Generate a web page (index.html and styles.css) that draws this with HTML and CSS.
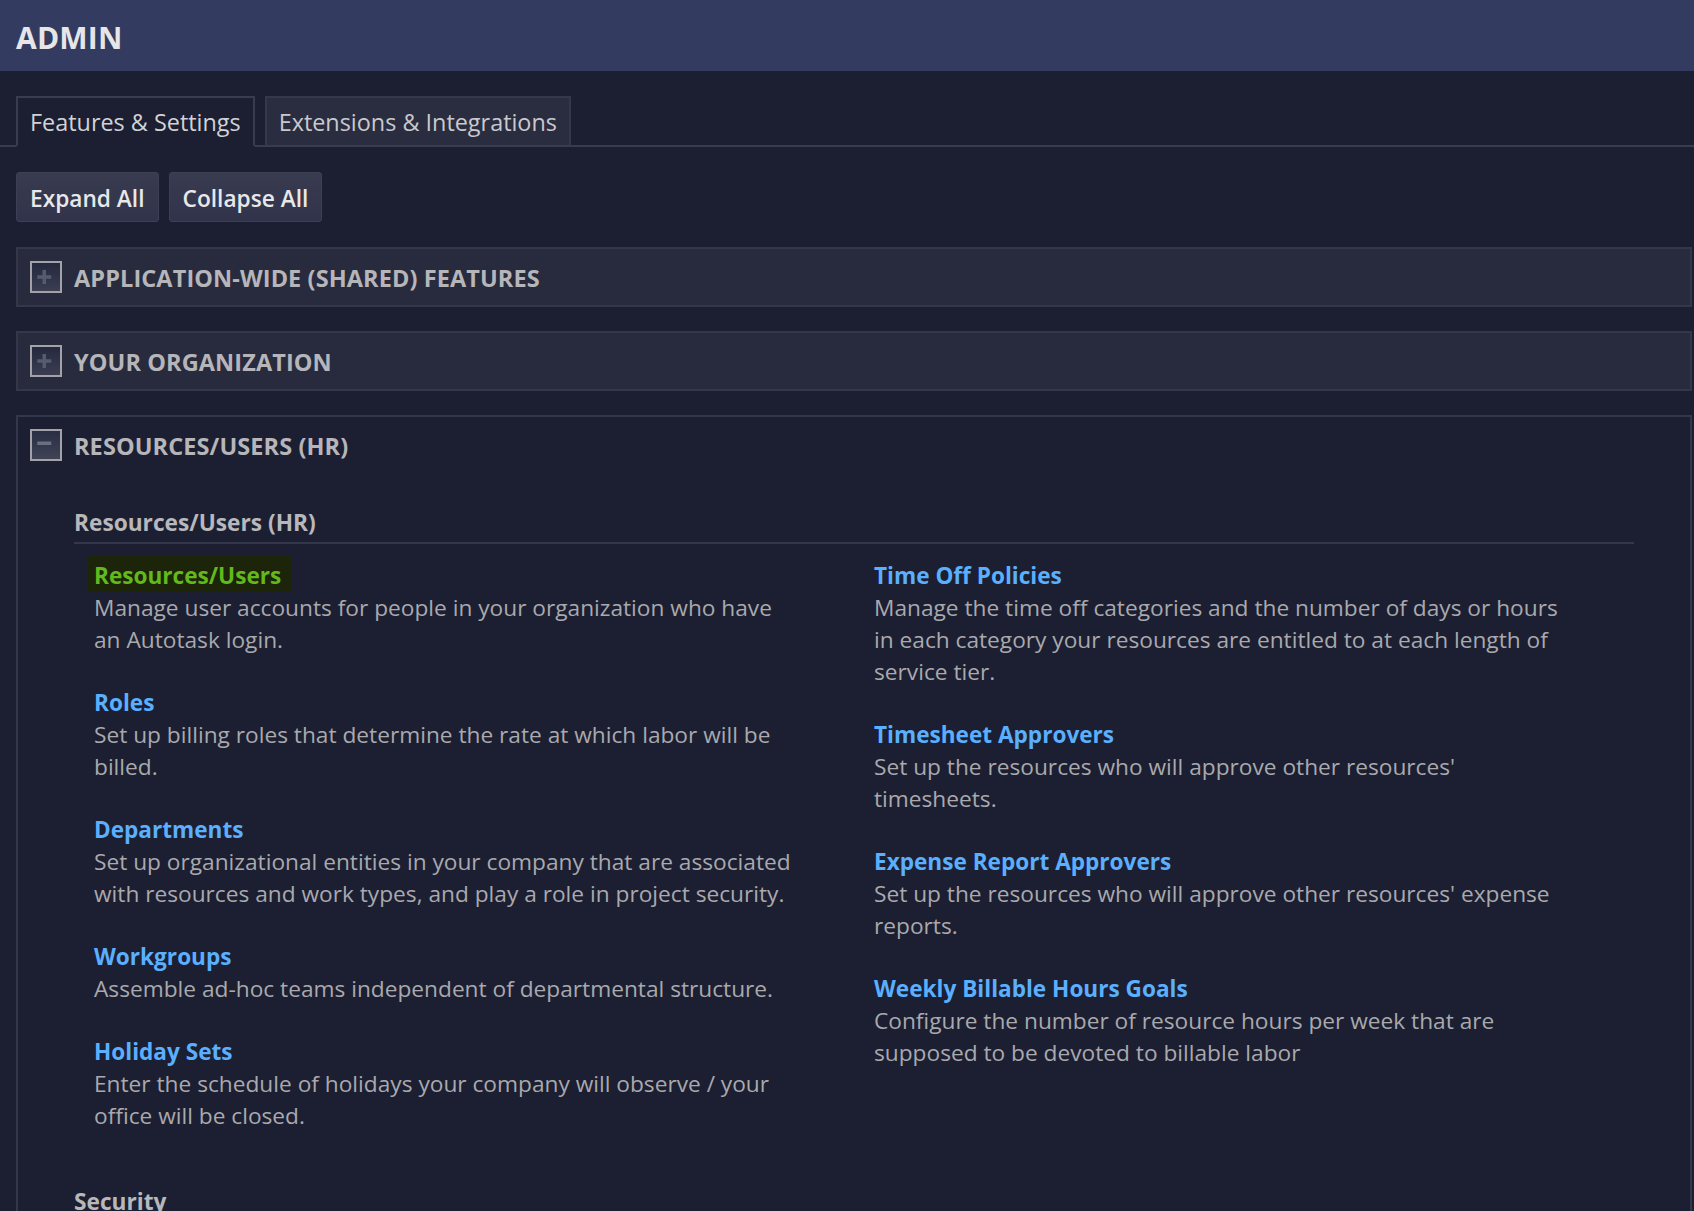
FILE: index.html
```html
<!DOCTYPE html>
<html lang="en">
<head>
    <meta charset="UTF-8">
    <meta name="viewport" content="width=device-width, initial-scale=1.0">
    <title>Admin</title>
    <link rel="stylesheet" href="styles.css">
</head>
<body>
    <header class="page-header"><h1>ADMIN</h1></header>

    <nav class="tabs">
        <a class="tab active" href="#">Features &amp; Settings</a>
        <a class="tab" href="#">Extensions &amp; Integrations</a>
    </nav>

    <main class="content">
        <div class="toolbar">
            <button class="btn">Expand All</button>
            <button class="btn">Collapse All</button>
        </div>

        <section class="panel">
            <div class="panel-head">
                <span class="toggle"><svg viewBox="0 0 32 32" width="28" height="28"><path d="M6 14h16v4H6zM12 8h4v16h-4z" fill="#575b6e"/></svg></span>
                <h2>APPLICATION-WIDE (SHARED) FEATURES</h2>
            </div>
        </section>

        <section class="panel">
            <div class="panel-head">
                <span class="toggle"><svg viewBox="0 0 32 32" width="28" height="28"><path d="M6 14h16v4H6zM12 8h4v16h-4z" fill="#575b6e"/></svg></span>
                <h2>YOUR ORGANIZATION</h2>
            </div>
        </section>

        <section class="panel open">
            <div class="panel-head">
                <span class="toggle"><svg viewBox="0 0 32 32" width="28" height="28"><path d="M6 12h16v4H6z" fill="#6b6f82"/></svg></span>
                <h2>RESOURCES/USERS (HR)</h2>
            </div>
            <div class="panel-body">
                <div class="group">
                    <h3>Resources/Users (HR)</h3>
                    <div class="cols">
                        <div class="col">
                            <div class="item">
                                <a class="current" href="#">Resources/Users</a>
                                <p>Manage user accounts for people in your organization who have an Autotask login.</p>
                            </div>
                            <div class="item">
                                <a href="#">Roles</a>
                                <p>Set up billing roles that determine the rate at which labor will be billed.</p>
                            </div>
                            <div class="item">
                                <a href="#">Departments</a>
                                <p>Set up organizational entities in your company that are associated with resources and work types, and play a role in project security.</p>
                            </div>
                            <div class="item">
                                <a href="#">Workgroups</a>
                                <p>Assemble ad-hoc teams independent of departmental structure.</p>
                            </div>
                            <div class="item">
                                <a href="#">Holiday Sets</a>
                                <p>Enter the schedule of holidays your company will observe / your office will be closed.</p>
                            </div>
                        </div>
                        <div class="col">
                            <div class="item">
                                <a href="#">Time Off Policies</a>
                                <p>Manage the time off categories and the number of days or hours in each category your resources are entitled to at each length of service tier.</p>
                            </div>
                            <div class="item">
                                <a href="#">Timesheet Approvers</a>
                                <p>Set up the resources who will approve other resources' timesheets.</p>
                            </div>
                            <div class="item">
                                <a href="#">Expense Report Approvers</a>
                                <p>Set up the resources who will approve other resources' expense reports.</p>
                            </div>
                            <div class="item">
                                <a href="#">Weekly Billable Hours Goals</a>
                                <p>Configure the number of resource hours per week that are supposed to be devoted to billable labor</p>
                            </div>
                        </div>
                    </div>
                </div>

                <div class="group">
                    <h3>Security</h3>
                    <div class="cols">
                        <div class="col">
                            <div class="item">
                                <a href="#">Security Levels</a>
                                <p>Define what resources can see and do in the application.</p>
                            </div>
                        </div>
                        <div class="col">
                            <div class="item">
                                <a href="#">Protected Data Permissions</a>
                                <p>Control access to protected fields.</p>
                            </div>
                        </div>
                    </div>
                </div>
            </div>
        </section>
    </main>
</body>
</html>
```

FILE: styles.css
```css
* { box-sizing: border-box; margin: 0; padding: 0; }
body { background: #1c1f31; color: #a9a9ae; font-family: "Open Sans", "Noto Sans", sans-serif; font-size: 22.7px; overflow: hidden; }
a { text-decoration: none; }

.page-header { background: #343b60; height: 71px; display: flex; align-items: center; padding: 3px 0 0 16px; }
.page-header h1 { color: #e6e6e8; font-size: 30px; font-weight: 700; letter-spacing: 0.2px; }

.tabs { display: flex; gap: 10px; margin-top: 25px; padding-left: 16px; border-bottom: 2px solid #393c4f; }
.tab { height: 51px; margin-bottom: -2px; padding: 0 12px; display: flex; align-items: center; font-size: 23.4px; color: #c9c9cd; background: #2a2d3f; border: 2px solid #35384b; border-bottom-color: #393c4f; }
.tab.active { background: #1c1f31; border-color: #393c4f; border-bottom-color: #1c1f31; color: #d2d2d6; }

.content { padding: 0 2px 0 16px; }

.toolbar { display: flex; gap: 10px; margin: 25px 0 25px; }
.btn { height: 50px; padding: 2px 13px 0; font-family: inherit; font-size: 22.7px; font-weight: 600; color: #e8e8ea; background: linear-gradient(#393c50, #30334a); border: 1px solid #3d4054; border-radius: 3px; }

.panel { border: 2px solid #34374a; margin-bottom: 24px; }
.panel-head { height: 56px; display: flex; align-items: center; gap: 12px; padding: 0 0 0 12px; background: #282b3d; }
.panel-head h2 { font-size: 23.5px; font-weight: 700; color: #b6b6ba; letter-spacing: 0.1px; padding-top: 2px; }
.panel.open .panel-head { background: #1c1f31; }

.toggle { width: 32px; height: 32px; border: 2px solid #a2a2a8; background: linear-gradient(#25293f, #3b3e51); display: flex; align-items: center; justify-content: center; }
.panel.open .toggle { background: linear-gradient(#2a2e44, #404356); }

.panel-body { padding: 9px 56px 0 56px; }
.group { margin-top: 25px; }
.group + .group { margin-top: 23px; }
.group h3 { font-size: 22.7px; font-weight: 700; color: #b8b8bc; line-height: 32px; padding-bottom: 3px; border-bottom: 2px solid #34374a; }

.cols { display: grid; grid-template-columns: 1fr 1fr; margin-top: 16px; }
.col { padding: 0 55px 0 20px; }
.item { margin-bottom: 31px; }
.item a { display: inline-block; font-size: 22.6px; font-weight: 700; line-height: 32px; color: #5aafff; }
.item a.current { color: #62b91c; background: #1c2409; padding: 4px 11px 0 7px; margin: -4px 0 0 -7px; }
.item p { line-height: 32px; color: #a9a9ae; }
```
